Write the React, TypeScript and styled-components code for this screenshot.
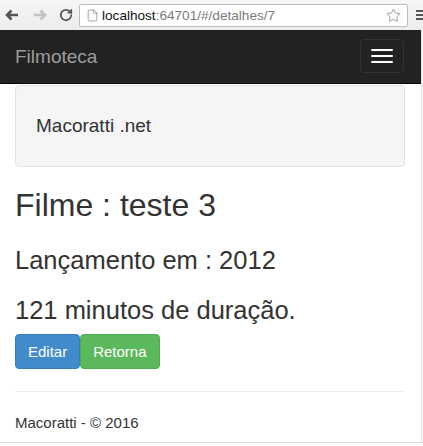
import React from 'react'
import styled, { createGlobalStyle } from 'styled-components'
import { RotateCw, Star, File } from 'lucide-react'

const GlobalStyle = createGlobalStyle`
  html, body {
    margin: 0;
    padding: 0;
    background: #fff;
  }
  body {
    font-family: "Liberation Sans", Arial, sans-serif;
    color: #333;
  }
  * {
    box-sizing: border-box;
  }
`

const Window = styled.div`
  width: 423px;
  height: 446px;
  display: flex;
  flex-direction: column;
  overflow: hidden;
`

const ChromeBar = styled.div`
  height: 30px;
  flex: none;
  display: flex;
  align-items: center;
  background: linear-gradient(#f6f6f6, #ececec);
`

const IconSlot = styled.div<{ $w: number }>`
  width: ${(p) => p.$w}px;
  flex: none;
  display: flex;
  align-items: center;
  justify-content: center;
`

const AddressBox = styled.div`
  margin-left: 4px;
  width: 329px;
  height: 23px;
  flex: none;
  display: flex;
  align-items: center;
  padding: 0 6px 0 6px;
  background: #fff;
  border: 1px solid #bdbdbd;
  border-radius: 2px;
  font-size: 13.6px;
`

const Url = styled.span`
  margin-left: 3px;
  color: #7b7b7b;
  white-space: nowrap;
  flex: 1;
`

const Host = styled.span`
  color: #111;
`

const MenuGlyph = styled.div`
  margin-left: 8px;
  display: flex;
  flex-direction: column;
  gap: 2px;
  flex: none;
  span {
    display: block;
    width: 10px;
    height: 2px;
    background: #555;
  }
`

const Viewport = styled.div`
  flex: none;
  height: 413px;
  display: flex;
  border-bottom: 1px solid #dcdcdc;
`

const Page = styled.div`
  width: 421px;
  flex: none;
  display: flex;
  flex-direction: column;
  background: #fff;
`

const Edge = styled.div`
  flex: 1;
  border-left: 1px solid #e2e2e2;
  background: #f7f7f7;
`

const Navbar = styled.nav`
  height: 54px;
  flex: none;
  display: flex;
  align-items: center;
  justify-content: space-between;
  padding: 0 17px 1px 15px;
  background: #222;
  border-bottom: 1px solid #080808;
`

const Brand = styled.span`
  font-size: 19px;
  line-height: 1;
  color: #9d9d9d;
`

const Toggle = styled.button`
  width: 44px;
  height: 34px;
  padding: 9px 10px;
  display: flex;
  flex-direction: column;
  justify-content: space-between;
  background: transparent;
  border: 1px solid #333;
  border-radius: 4px;
`

const Bar = styled.span`
  display: block;
  width: 22px;
  height: 2px;
  background: #fff;
  border-radius: 1px;
`

const Container = styled.main`
  padding: 0 16px 0 15px;
  display: flex;
  flex-direction: column;
`

const Well = styled.div`
  margin-top: 1px;
  padding: 26px 20px 27px;
  background: #f5f5f5;
  border: 1px solid #e3e3e3;
  border-radius: 4px;
  font-size: 19px;
  line-height: 27px;
  color: #333;
`

const Title = styled.h1`
  margin: 21px 0 0;
  font-size: 32px;
  line-height: 35px;
  font-weight: 400;
  color: #333;
`

const SubTitle = styled.h3<{ $gap: number }>`
  margin: ${(p) => p.$gap}px 0 0;
  font-size: 25.5px;
  line-height: 28px;
  font-weight: 400;
  color: #333;
`

const ButtonRow = styled.div`
  margin-top: 10px;
  display: flex;
`

const Button = styled.button<{ $tone: 'primary' | 'success' }>`
  height: 35px;
  padding: 0 12px;
  font-family: inherit;
  font-size: 15px;
  color: #fff;
  border-radius: 4px;
  border: 1px solid ${(p) => (p.$tone === 'primary' ? '#357ebd' : '#4cae4c')};
  background: ${(p) => (p.$tone === 'primary' ? '#428bca' : '#5cb85c')};
`

const Rule = styled.hr`
  margin: 22px 0 0;
  border: 0;
  border-top: 1px solid #eee;
`

const Footer = styled.footer`
  margin-top: 20px;
  font-size: 15px;
  line-height: 21px;
  color: #333;
`

function ArrowIcon({ dir, color }: { dir: 'left' | 'right'; color: string }) {
  return (
    <svg width="14" height="12" viewBox="0 0 14 12" style={{ transform: dir === 'right' ? 'scaleX(-1)' : undefined }}>
      <path d="M13 6H2.5M6.5 1.5L2 6l4.5 4.5" fill="none" stroke={color} strokeWidth="2.6" strokeLinejoin="miter" />
    </svg>
  )
}

export default function App() {
  return (
    <>
      <GlobalStyle />
      <Window>
        <ChromeBar>
          <IconSlot $w={23}>
            <ArrowIcon dir="left" color="#555" />
          </IconSlot>
          <IconSlot $w={33}>
            <ArrowIcon dir="right" color="#c2c2c2" />
          </IconSlot>
          <IconSlot $w={19}>
            <RotateCw size={14} strokeWidth={3} color="#555" />
          </IconSlot>
          <AddressBox>
            <File size={13} strokeWidth={1.4} color="#8a8a8a" />
            <Url>
              <Host>localhost</Host>:64701/#/detalhes/7
            </Url>
            <Star size={15} strokeWidth={1.2} color="#7a7a7a" />
          </AddressBox>
          <MenuGlyph>
            <span />
            <span />
            <span />
          </MenuGlyph>
        </ChromeBar>
        <Viewport>
          <Page>
            <Navbar>
              <Brand>Filmoteca</Brand>
              <Toggle type="button" aria-label="menu">
                <Bar />
                <Bar />
                <Bar />
              </Toggle>
            </Navbar>
            <Container>
              <Well>Macoratti .net</Well>
              <Title>Filme : teste 3</Title>
              <SubTitle $gap={23}>Lançamento em : 2012</SubTitle>
              <SubTitle $gap={22}>121 minutos de duração.</SubTitle>
              <ButtonRow>
                <Button $tone="primary">Editar</Button>
                <Button $tone="success">Retorna</Button>
              </ButtonRow>
              <Rule />
              <Footer>Macoratti - © 2016</Footer>
            </Container>
          </Page>
          <Edge />
        </Viewport>
      </Window>
    </>
  )
}
